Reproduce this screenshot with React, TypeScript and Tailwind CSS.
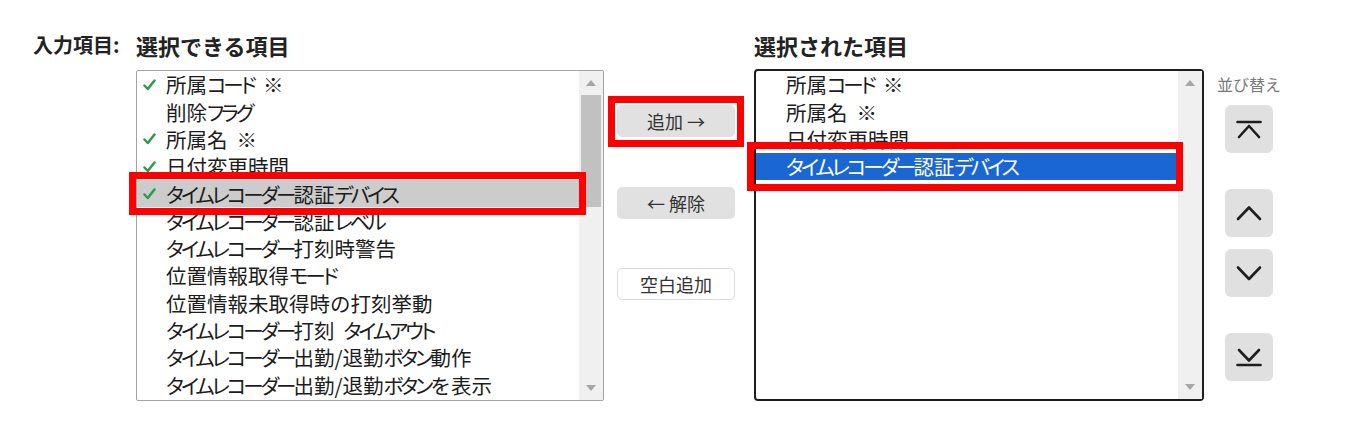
import React from "react";

const leftItems: { label: string; checked: boolean }[] = [
  { label: "所属コード ※", checked: true },
  { label: "削除フラグ", checked: false },
  { label: "所属名 ※", checked: true },
  { label: "日付変更時間", checked: true },
  { label: "タイムレコーダー認証デバイス", checked: true },
  { label: "タイムレコーダー認証レベル", checked: false },
  { label: "タイムレコーダー打刻時警告", checked: false },
  { label: "位置情報取得モード", checked: false },
  { label: "位置情報未取得時の打刻挙動", checked: false },
  { label: "タイムレコーダー打刻 タイムアウト", checked: false },
  { label: "タイムレコーダー出勤/退勤ボタン動作", checked: false },
  { label: "タイムレコーダー出勤/退勤ボタンを表示", checked: false },
];

const rightItems = ["所属コード ※", "所属名 ※", "日付変更時間", "タイムレコーダー認証デバイス"];

function JText({ text }: { text: string }) {
  const parts = text.split(/([\u30A0-\u30FF]+| )/).filter((p) => p.length > 0);
  return (
    <span className="leading-none">
      {parts.map((p, i) => {
        if (p === " ") return <span key={i} className="inline-block w-[9px]">{"\u00a0"}</span>;
        if (/^[\u30A0-\u30FF]+$/.test(p))
          return (
            <span key={i} className="[font-feature-settings:'palt'] tracking-[-3px]">
              {p}
            </span>
          );
        return <span key={i}>{p}</span>;
      })}
    </span>
  );
}

function Check() {
  return (
    <svg width="13" height="12" viewBox="0 0 13 12" fill="none">
      <path d="M1.5 6.5 L4.8 10 L11.5 1.5" stroke="#2f9a47" strokeWidth="2.5" strokeLinecap="round" strokeLinejoin="round" />
    </svg>
  );
}

function ArrowUp() {
  return (
    <svg width="10" height="6" viewBox="0 0 10 6">
      <polygon points="0,6 5,0 10,6" fill="#a6a6a6" />
    </svg>
  );
}

function ArrowDown() {
  return (
    <svg width="10" height="6" viewBox="0 0 10 6">
      <polygon points="0,0 5,6 10,0" fill="#a6a6a6" />
    </svg>
  );
}

function IconTop() {
  return (
    <svg width="26" height="26" viewBox="0 0 26 26" fill="none" stroke="#1e1e1e" strokeWidth="2.6" strokeLinecap="round" strokeLinejoin="round">
      <path d="M1.5 6 H24.5" />
      <path d="M3 21 L13 10 L23 21" />
    </svg>
  );
}
function IconUp() {
  return (
    <svg width="26" height="26" viewBox="0 0 26 26" fill="none" stroke="#1e1e1e" strokeWidth="2.6" strokeLinecap="round" strokeLinejoin="round">
      <path d="M2 19 L13 7.5 L24 19" />
    </svg>
  );
}
function IconDown() {
  return (
    <svg width="26" height="26" viewBox="0 0 26 26" fill="none" stroke="#1e1e1e" strokeWidth="2.6" strokeLinecap="round" strokeLinejoin="round">
      <path d="M2 7.5 L13 19 L24 7.5" />
    </svg>
  );
}
function IconBottom() {
  return (
    <svg width="26" height="26" viewBox="0 0 26 26" fill="none" stroke="#1e1e1e" strokeWidth="2.6" strokeLinecap="round" strokeLinejoin="round">
      <path d="M3 6 L13 16.5 L23 6" />
      <path d="M1.5 21 H24.5" />
    </svg>
  );
}

export default function App() {
  return (
    <div className="w-[1348px] h-[438px] bg-white text-[#1c1c1c] font-['Noto_Sans_CJK_JP','Noto_Sans',sans-serif]">
      <div className="flex items-start pt-[33px] pl-[33px]">
        {/* label */}
        <div className="w-[103px] text-[20px] font-bold leading-[24px] text-[#222]">入力項目:</div>

        {/* left column */}
        <div className="w-[468px]">
          <div className="text-[22px] font-bold leading-[24px] text-[#222]">選択できる項目</div>
          <div className="relative mt-[13px] h-[331px] border border-[#a3a3a3] rounded-[2px] flex">
            <div className="flex-1 flex flex-col text-[20.5px]">
              {leftItems.map((it, i) => (
                <div
                  key={i}
                  className={`flex items-center h-[27.3px] shrink-0 whitespace-nowrap ${i === 4 ? "bg-[#cccccc]" : ""}`}
                >
                  <div className="w-[29px] pl-[6px] flex items-center">{it.checked ? <Check /> : null}</div>
                  <JText text={it.label} />
                </div>
              ))}
            </div>
            <div className="w-[24px] bg-[#f0f0f0] flex flex-col items-center">
              <div className="h-[24px] flex items-center justify-center"><ArrowUp /></div>
              <div className="w-[20px] h-[112px] bg-[#c1c1c1]" />
              <div className="flex-1" />
              <div className="h-[24px] flex items-center justify-center"><ArrowDown /></div>
            </div>
            <div className="absolute left-[-8px] top-[101px] w-[457px] h-[43px] border-[7px] border-[#ff0000]" />
          </div>
        </div>

        {/* middle buttons */}
        <div className="ml-[13px] w-[118px] pt-[72px] flex flex-col text-[18px] text-[#333]">
          <div className="relative">
            <div className="h-[32px] rounded-[5px] bg-[#e1e1e1] flex items-center justify-center">追加&nbsp;→</div>
            <div className="absolute left-[-9px] top-[-9px] w-[136px] h-[51px] border-[7px] border-[#ff0000]" />
          </div>
          <div className="mt-[50px] h-[32px] rounded-[5px] bg-[#e1e1e1] flex items-center justify-center">←&nbsp;解除</div>
          <div className="mt-[49px] h-[32px] rounded-[5px] bg-white border border-[#dcdcdc] flex items-center justify-center">空白追加</div>
        </div>

        {/* right column */}
        <div className="ml-[19px] w-[450px]">
          <div className="text-[22px] font-bold leading-[24px] text-[#222]">選択された項目</div>
          <div className="relative mt-[12px] h-[332px] border-2 border-[#1e1e1e] rounded-[4px] flex">
            <div className="flex-1 flex flex-col text-[20.5px]">
              {rightItems.map((label, i) => (
                <div
                  key={i}
                  className={`flex items-center h-[27.3px] shrink-0 pl-[30px] whitespace-nowrap ${i === 3 ? "bg-[#1a67d3] text-white" : ""}`}
                >
                  <JText text={label} />
                </div>
              ))}
            </div>
            <div className="w-[24px] bg-[#f0f0f0] flex flex-col items-center">
              <div className="h-[24px] flex items-center justify-center"><ArrowUp /></div>
              <div className="flex-1" />
              <div className="h-[24px] flex items-center justify-center"><ArrowDown /></div>
            </div>
            <div className="absolute left-[-9px] top-[71px] w-[436px] h-[49px] border-[7px] border-[#ff0000]" />
          </div>
        </div>

        {/* reorder */}
        <div className="ml-[10px] w-[70px] flex flex-col items-center">
          <div className="mt-[41px] text-[16px] leading-[20px] text-[#7a7a7a]">並び替え</div>
          <div className="mt-[11px] w-[48px] h-[48px] rounded-[6px] bg-[#e0e0e0] flex items-center justify-center"><IconTop /></div>
          <div className="mt-[36px] w-[48px] h-[48px] rounded-[6px] bg-[#e0e0e0] flex items-center justify-center"><IconUp /></div>
          <div className="mt-[12px] w-[48px] h-[48px] rounded-[6px] bg-[#e0e0e0] flex items-center justify-center"><IconDown /></div>
          <div className="mt-[36px] w-[48px] h-[48px] rounded-[6px] bg-[#e0e0e0] flex items-center justify-center"><IconBottom /></div>
        </div>
      </div>
    </div>
  );
}
